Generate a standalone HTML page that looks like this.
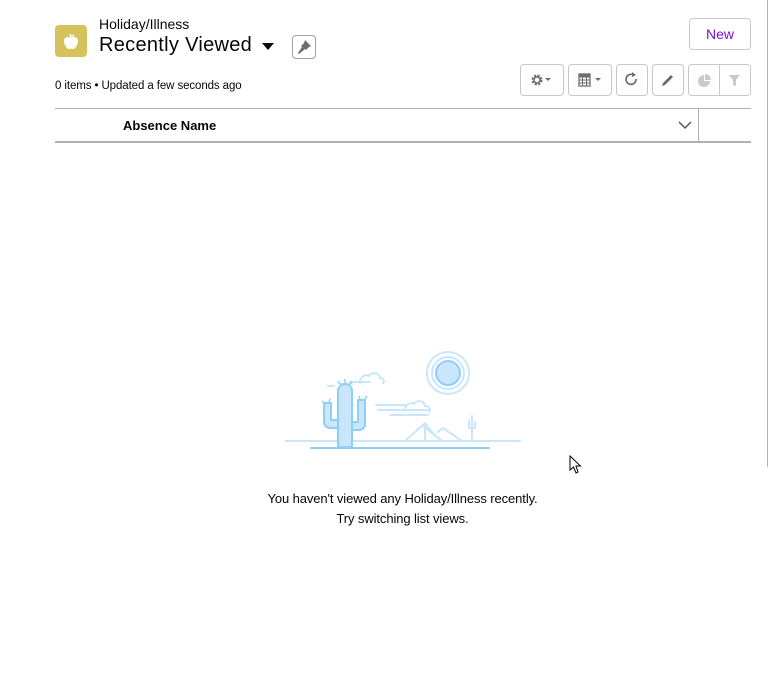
<!DOCTYPE html>
<html><head><meta charset="utf-8"><style>
*{box-sizing:border-box;margin:0;padding:0}
body{width:770px;height:695px;background:#fff;position:relative;overflow:hidden;font-family:"Liberation Sans",sans-serif;color:#080707}
.a{position:absolute}
.btn{position:absolute;border:1px solid #c9c9c9;border-radius:4px;background:#fff;height:32px;top:64px}
</style></head><body>
<div class="a" style="left:767px;top:0;width:1px;height:467px;background:#b0b0b0"></div>
<div class="a" style="left:55px;top:25px;width:32px;height:32px;background:#d6c25c;border-radius:4px">
<svg width="32" height="32" viewBox="0 0 32 32"><path d="M16 13 C13 11 9 12 9 16 C9 20 12 24 14 24 C15 24 15.5 23.5 16 23.5 C16.5 23.5 17 24 18 24 C20 24 23 20 23 16 C23 12 19 11 16 13Z" fill="#fff"/><path d="M16 12 L15 9 M16 12 L19 10" stroke="#fff" stroke-width="1.5"/></svg></div>
<div class="a" style="left:99px;top:16px;font-size:14px">Holiday/Illness</div>
<div class="a" style="left:99px;top:34px;font-size:20px;letter-spacing:0.3px">Recently Viewed</div>
<div class="a" style="left:262px;top:43px;width:0;height:0;border-left:6px solid transparent;border-right:6px solid transparent;border-top:7px solid #080707"></div>
<div class="a" style="left:292px;top:35px;width:24px;height:24px;border:1px solid #a0a0a0;border-radius:4px">
<svg width="22" height="22" viewBox="0 0 22 22"><path d="M12 4 L18 10 L16 11 L13 14 L12 13 L6 18 L5 17 L9 11 L8 10 L11 7Z" fill="#706e6b"/></svg></div>
<div class="a" style="left:55px;top:80px;font-size:11.5px;letter-spacing:-0.1px">0 items • Updated a few seconds ago</div>
<div class="btn" style="left:689px;top:18px;width:62px;height:32px;color:#7a0ee0;font-size:14px;text-align:center;line-height:30px">New</div>
<div class="btn" style="left:520px;width:44px"><svg width="42" height="30"><circle cx="16" cy="15" r="4" fill="none" stroke="#706e6b" stroke-width="3" stroke-dasharray="2 1.2"/><circle cx="16" cy="15" r="3" fill="none" stroke="#706e6b" stroke-width="1.5"/><path d="M24 13h6l-3 3z" fill="#706e6b"/></svg></div>
<div class="btn" style="left:568px;width:44px"><svg width="42" height="30"><rect x="10" y="9" width="11" height="12" fill="none" stroke="#706e6b" stroke-width="1.3"/><path d="M10 12h11M10 15h11M10 18h11M13.5 12v9M17.5 12v9" stroke="#706e6b"/><rect x="10" y="9" width="11" height="2.5" fill="#706e6b"/><path d="M26 13h6l-3 3z" fill="#706e6b"/></svg></div>
<div class="btn" style="left:616px;width:32px"><svg width="30" height="30"><path d="M19 14 A5 5 0 1 1 16.5 10" fill="none" stroke="#706e6b" stroke-width="1.7"/><path d="M15 7 L19 10 L15 12Z" fill="#706e6b"/></svg></div>
<div class="btn" style="left:652px;width:32px"><svg width="30" height="30"><path d="M9 21 L10 18 L18 10 L20 12 L12 20Z" fill="#706e6b"/></svg></div>
<div class="btn" style="left:688px;width:63px"><div class="a" style="left:30px;top:0;width:1px;height:30px;background:#c9c9c9"></div><svg width="61" height="30"><path d="M15 10 A6 6 0 1 0 21 16 L15 16Z" fill="#c9c9c9"/><path d="M16 9 A6 6 0 0 1 22 15 L16 15Z" fill="#c9c9c9"/><path d="M40 10h11l-4 5v6l-3-1v-5z" fill="#c9c9c9"/></svg></div>
<div class="a" style="left:55px;top:108px;width:696px;height:1px;background:#b0b0b0"></div>
<div class="a" style="left:55px;top:141px;width:696px;height:2px;background:#b0b0b0"></div>
<div class="a" style="left:698px;top:109px;width:1px;height:32px;background:#b0b0b0"></div>
<div class="a" style="left:123px;top:118px;font-size:13px;font-weight:bold">Absence Name</div>
<svg class="a" style="left:678px;top:120px" width="14" height="10"><path d="M1 2 L7 8 L13 2" fill="none" stroke="#514f4d" stroke-width="1.4"/></svg>
<svg class="a" style="left:280px;top:340px" width="250" height="120" viewBox="0 0 250 120">
<g fill="none" stroke="#c9e6fc" stroke-width="2" stroke-linecap="round">
<line x1="6" y1="101" x2="240" y2="101"/>
<circle cx="168" cy="33" r="21"/><circle cx="168" cy="33" r="16"/>
<path d="M70 42 h20 M48 46 h6 M60 44 h12"/>
<path d="M80 43 c0-7 6-9 9-7 c2-4 10-4 11 2 c3 0 5 3 3 5"/>
<path d="M125 70 c0-6 6-8 9-6 c2-4 10-4 11 2 c4 0 6 3 4 6 M98 70 h52 M110 75 h38 M96 65 h30"/>
<path d="M125 101 L145 83 L155 96 M143 86 L162 101 M158 92 L163 88 L182 101 M145 84 v17"/>
<path d="M192 101 v-25 M189 80 v8 h6 v-6"/>
</g>
<circle cx="168" cy="33" r="12" fill="#c9e6fc" stroke="#8fcff7" stroke-width="2"/>
<g fill="#c9e6fc" stroke="#8fcff7" stroke-width="2" stroke-linejoin="round">
<path d="M58 107 V51 a7 7 0 0 1 14 0 V107Z"/>
<path d="M58 88 h-8 a6 6 0 0 1-6-6 V63 h7 V80 h7Z"/>
<path d="M72 90 h7 a6 6 0 0 0 6-6 V60 h-7 V82 h-6Z"/>
</g>
<path d="M60 44 l-2-3 M65 43 v-4 M70 44 l2-3 M44 63 l-2-2 M49 62 l1-3 M80 59 l-1-3 M85 59 l2-3" stroke="#8fcff7" stroke-width="1.5"/>
<line x1="30" y1="108" x2="210" y2="108" stroke="#8fcff7" stroke-width="2"/>
</svg>
<div class="a" style="left:0;width:805px;top:489px;font-size:13px;text-align:center;line-height:20px;letter-spacing:-0.1px">You haven't viewed any Holiday/Illness recently.<br>Try switching list views.</div>
<svg class="a" style="left:569px;top:455px" width="14" height="20"><path d="M1 1 V15 L4.5 12 L7 18 L9 17 L7 11 L11.5 11Z" fill="#fff" stroke="#000"/></svg>
</body></html>
